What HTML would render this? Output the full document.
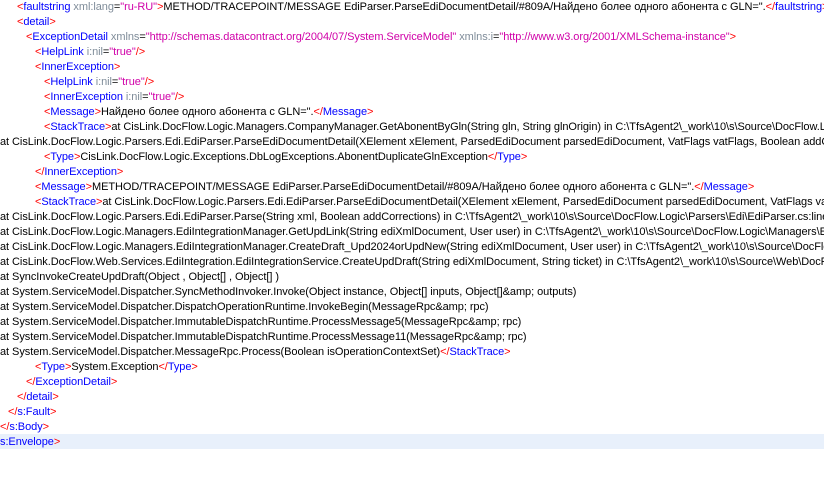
<!DOCTYPE html>
<html><head><meta charset="utf-8"><style>
html,body{margin:0;padding:0;background:#fff;width:824px;height:485px;overflow:hidden}
#c{position:absolute;left:0;top:-1px;width:824px;font-family:"Liberation Sans",Arial,sans-serif;font-size:11px;line-height:15px;color:#000;letter-spacing:-0.06px}
.l{height:14px;padding-top:1px;overflow:hidden;position:relative;white-space:pre}
.b{color:#ff0000}.n{color:#0000ff}.a{color:#7f8c99}.v{color:#d000a8}
.hl{background:#e8f0fb}
</style></head><body><div id="c"><div class="l" style="padding-left:17px"><span class="b">&lt;</span><span class="n">faultstring</span> <span class="a">xml:lang</span>=<span class="v">"ru-RU"</span><span class="b">&gt;</span>METHOD/TRACEPOINT/MESSAGE EdiParser.ParseEdiDocumentDetail/#809A/Найдено более одного абонента с GLN=".<span class="b">&lt;/</span><span class="n">faultstring</span><span class="b">&gt;</span></div><div class="l" style="padding-left:17px"><span class="b">&lt;</span><span class="n">detail</span><span class="b">&gt;</span></div><div class="l" style="padding-left:26px"><span class="b">&lt;</span><span class="n">ExceptionDetail</span> <span class="a">xmlns</span>=<span class="v">"http://schemas.datacontract.org/2004/07/System.ServiceModel"</span> <span class="a">xmlns:i</span>=<span class="v">"http://www.w3.org/2001/XMLSchema-instance"</span><span class="b">&gt;</span></div><div class="l" style="padding-left:35px"><span class="b">&lt;</span><span class="n">HelpLink</span> <span class="a">i:nil</span>=<span class="v">"true"</span><span class="b">/&gt;</span></div><div class="l" style="padding-left:35px"><span class="b">&lt;</span><span class="n">InnerException</span><span class="b">&gt;</span></div><div class="l" style="padding-left:44px"><span class="b">&lt;</span><span class="n">HelpLink</span> <span class="a">i:nil</span>=<span class="v">"true"</span><span class="b">/&gt;</span></div><div class="l" style="padding-left:44px"><span class="b">&lt;</span><span class="n">InnerException</span> <span class="a">i:nil</span>=<span class="v">"true"</span><span class="b">/&gt;</span></div><div class="l" style="padding-left:44px"><span class="b">&lt;</span><span class="n">Message</span><span class="b">&gt;</span>Найдено более одного абонента с GLN=".<span class="b">&lt;/</span><span class="n">Message</span><span class="b">&gt;</span></div><div class="l" style="padding-left:44px"><span class="b">&lt;</span><span class="n">StackTrace</span><span class="b">&gt;</span>at CisLink.DocFlow.Logic.Managers.CompanyManager.GetAbonentByGln(String gln, String glnOrigin) in C:\TfsAgent2\_work\10\s\Source\DocFlow.Logic</div><div class="l">at CisLink.DocFlow.Logic.Parsers.Edi.EdiParser.ParseEdiDocumentDetail(XElement xElement, ParsedEdiDocument parsedEdiDocument, VatFlags vatFlags, Boolean addCorrections)</div><div class="l" style="padding-left:44px"><span class="b">&lt;</span><span class="n">Type</span><span class="b">&gt;</span>CisLink.DocFlow.Logic.Exceptions.DbLogExceptions.AbonentDuplicateGlnException<span class="b">&lt;/</span><span class="n">Type</span><span class="b">&gt;</span></div><div class="l" style="padding-left:35px"><span class="b">&lt;/</span><span class="n">InnerException</span><span class="b">&gt;</span></div><div class="l" style="padding-left:35px"><span class="b">&lt;</span><span class="n">Message</span><span class="b">&gt;</span>METHOD/TRACEPOINT/MESSAGE EdiParser.ParseEdiDocumentDetail/#809A/Найдено более одного абонента с GLN=".<span class="b">&lt;/</span><span class="n">Message</span><span class="b">&gt;</span></div><div class="l" style="padding-left:35px"><span class="b">&lt;</span><span class="n">StackTrace</span><span class="b">&gt;</span>at CisLink.DocFlow.Logic.Parsers.Edi.EdiParser.ParseEdiDocumentDetail(XElement xElement, ParsedEdiDocument parsedEdiDocument, VatFlags vatFlags</div><div class="l">at CisLink.DocFlow.Logic.Parsers.Edi.EdiParser.Parse(String xml, Boolean addCorrections) in C:\TfsAgent2\_work\10\s\Source\DocFlow.Logic\Parsers\Edi\EdiParser.cs:line</div><div class="l">at CisLink.DocFlow.Logic.Managers.EdiIntegrationManager.GetUpdLink(String ediXmlDocument, User user) in C:\TfsAgent2\_work\10\s\Source\DocFlow.Logic\Managers\Edi</div><div class="l">at CisLink.DocFlow.Logic.Managers.EdiIntegrationManager.CreateDraft_Upd2024orUpdNew(String ediXmlDocument, User user) in C:\TfsAgent2\_work\10\s\Source\DocFlow</div><div class="l">at CisLink.DocFlow.Web.Services.EdiIntegration.EdiIntegrationService.CreateUpdDraft(String ediXmlDocument, String ticket) in C:\TfsAgent2\_work\10\s\Source\Web\DocFlow</div><div class="l">at SyncInvokeCreateUpdDraft(Object , Object[] , Object[] )</div><div class="l">at System.ServiceModel.Dispatcher.SyncMethodInvoker.Invoke(Object instance, Object[] inputs, Object[]&amp;amp; outputs)</div><div class="l">at System.ServiceModel.Dispatcher.DispatchOperationRuntime.InvokeBegin(MessageRpc&amp;amp; rpc)</div><div class="l">at System.ServiceModel.Dispatcher.ImmutableDispatchRuntime.ProcessMessage5(MessageRpc&amp;amp; rpc)</div><div class="l">at System.ServiceModel.Dispatcher.ImmutableDispatchRuntime.ProcessMessage11(MessageRpc&amp;amp; rpc)</div><div class="l">at System.ServiceModel.Dispatcher.MessageRpc.Process(Boolean isOperationContextSet)<span class="b">&lt;/</span><span class="n">StackTrace</span><span class="b">&gt;</span></div><div class="l" style="padding-left:35px"><span class="b">&lt;</span><span class="n">Type</span><span class="b">&gt;</span>System.Exception<span class="b">&lt;/</span><span class="n">Type</span><span class="b">&gt;</span></div><div class="l" style="padding-left:26px"><span class="b">&lt;/</span><span class="n">ExceptionDetail</span><span class="b">&gt;</span></div><div class="l" style="padding-left:17px"><span class="b">&lt;/</span><span class="n">detail</span><span class="b">&gt;</span></div><div class="l" style="padding-left:8px"><span class="b">&lt;/</span><span class="n">s:Fault</span><span class="b">&gt;</span></div><div class="l"><span class="b">&lt;/</span><span class="n">s:Body</span><span class="b">&gt;</span></div><div class="l hl"><span class="n">s:Envelope</span><span class="b">&gt;</span></div></div></body></html>
